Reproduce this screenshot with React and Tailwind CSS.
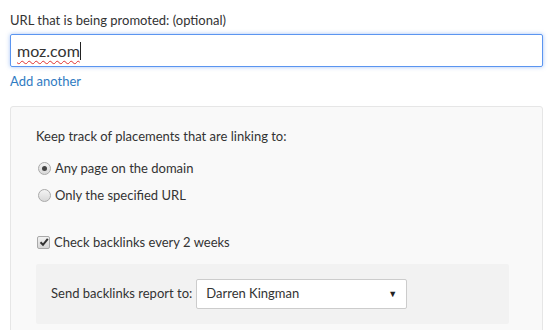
import React from "react";

function Radio({ checked }) {
  return (
    <span className="w-[13px] h-[13px] rounded-full border border-[#aaa] bg-gradient-to-b from-[#f4f4f4] to-[#d8d8d8] flex items-center justify-center shrink-0">
      {checked && <span className="w-[5px] h-[5px] rounded-full bg-[#444]" />}
    </span>
  );
}

function Checkbox() {
  return (
    <span className="w-[13px] h-[13px] rounded-[2px] border border-[#a9a9a9] bg-gradient-to-b from-[#f2f2f2] to-[#d6d6d6] flex items-center justify-center shrink-0">
      <svg width="10" height="10" viewBox="0 0 10 10">
        <path d="M1.5 5.2 L4 7.8 L8.8 1.8" fill="none" stroke="#333" strokeWidth="2" />
      </svg>
    </span>
  );
}

export default function App() {
  return (
    <div className="w-[552px] h-[330px] overflow-hidden bg-white text-[#333] text-[13px] font-['Lato',sans-serif] pl-[10px] pr-[9px]">
      <div className="pt-[12px] leading-[16px]">URL that is being promoted: (optional)</div>
      <div className="mt-[6px] h-[33px] border border-[#5b95f0] rounded-[2px] shadow-[0_0_4px_rgba(80,140,240,0.5)] flex items-center pl-[6px]">
        <span className="text-[16px] text-[#333] underline decoration-wavy decoration-[#e03030] decoration-1 underline-offset-[3px]">moz.com</span>
        <span className="w-px h-[18px] bg-[#222]" />
      </div>
      <div className="mt-[6px] leading-[16px] text-[#2f7bc2]">Add another</div>
      <div className="mt-[17px] bg-[#f9f9f9] border border-[#e6e6e6] rounded-[3px] pl-[25px] pr-[33px] pt-[21px] h-[240px]">
        <div className="leading-[16px]">Keep track of placements that are linking to:</div>
        <div className="mt-[16px] flex items-center gap-[4px] pl-[2px] leading-[16px]">
          <Radio checked />
          <span>Any page on the domain</span>
        </div>
        <div className="mt-[11px] flex items-center gap-[4px] pl-[2px] leading-[16px]">
          <Radio />
          <span>Only the specified URL</span>
        </div>
        <div className="mt-[31px] flex items-center gap-[4px] pl-[1px] leading-[16px]">
          <Checkbox />
          <span>Check backlinks every 2 weeks</span>
        </div>
        <div className="mt-[14px] bg-[#f2f2f2] rounded-[2px] h-[60px] flex items-center pl-[15px]">
          <span className="mr-[4px]">Send backlinks report to:</span>
          <div className="w-[211px] h-[30px] bg-white border border-[#ccc] rounded-[2px] flex items-center justify-between pl-[9px] pr-[9px]">
            <span className="text-[#333]">Darren Kingman</span>
            <span className="text-[9px] text-[#222]">▼</span>
          </div>
        </div>
      </div>
    </div>
  );
}
